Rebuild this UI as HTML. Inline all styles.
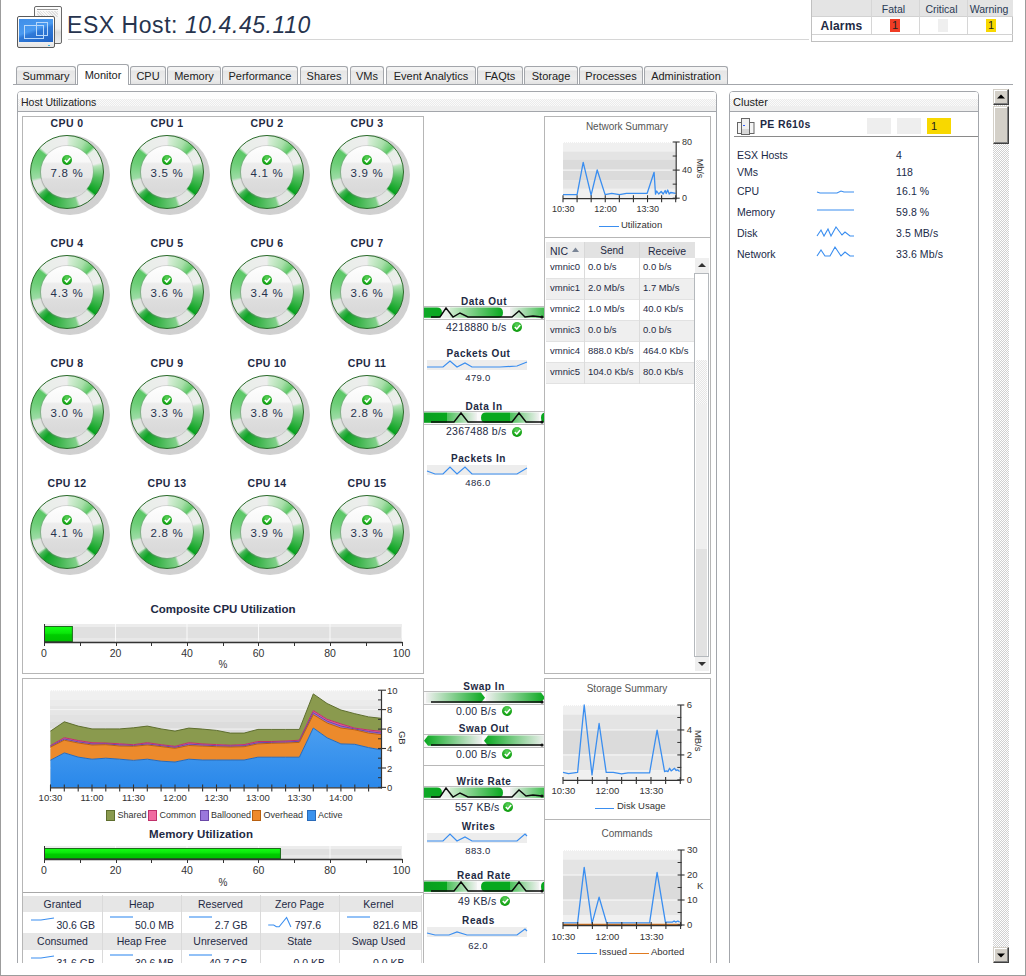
<!DOCTYPE html>
<html><head><meta charset="utf-8"><style>
*{box-sizing:border-box;margin:0;padding:0}
html,body{width:1026px;height:976px;overflow:hidden;background:#fff}
body{position:relative;font-family:"Liberation Sans",sans-serif;font-size:10.5px;color:#1e2a44}
.a{position:absolute}
.t{position:absolute;white-space:nowrap;line-height:1}
.c{text-align:center}
.r{text-align:right}
.b{font-weight:bold}
.hatch{background-color:#eeeeee;background-image:repeating-linear-gradient(45deg,rgba(255,255,255,.75) 0 1px,transparent 1px 3px),repeating-linear-gradient(-45deg,rgba(255,255,255,.75) 0 1px,transparent 1px 3px)}
.tab{position:absolute;top:66px;height:18px;border:1px solid #a3a6ab;border-bottom:none;border-radius:3px 3px 0 0;background:linear-gradient(#f4f4f4 0,#f4f4f4 15%,#e6e6e6 25%,#ececec 75%,#e2e2e2 100%);font-size:11px;color:#222;text-align:center;line-height:18px}
.panel{position:absolute;border:1px solid #a3a6ab;border-radius:4px 4px 0 0;background:#fff}
.ph{position:absolute;left:0;right:0;top:0;height:20px;border-bottom:1px solid #a3a6ab;border-radius:3px 3px 0 0;background:linear-gradient(#fdfdfd 0,#fdfdfd 7px,rgba(255,255,255,0) 7px,rgba(255,255,255,0) 14px,#eeeeee 14px,#eeeeee 19px),repeating-conic-gradient(#ebebeb 0 25%,#fafafa 0 50%) 0 0/2px 2px}
.box{position:absolute;border:1px solid #b6b6b6;background:#fff}
.g{position:absolute;width:90px;height:90px}
.gs{position:absolute;left:7.5px;top:7.5px;width:80px;height:80px;border-radius:50%;background:radial-gradient(circle,#cccccc 0,#d2d2d2 84%,rgba(230,230,230,0) 100%)}
.gr{position:absolute;left:8px;top:8px;width:74px;height:74px;border-radius:50%;border:1.5px solid #2a6c2a;background:conic-gradient(#ececec 0deg,#d6eed6 4deg,#a6dea8 30deg,#5cc865 46deg,#e6efe6 51deg,#eeeeee 74deg,#b5e3b8 79deg,#54c060 100deg,#07a11e 128deg,#dfe6df 133deg,#e6e6e6 158deg,#80d088 163deg,#3cb44c 195deg,#0ea326 220deg,#4ab85a 230deg,#dde8dd 235deg,#e4e4e4 254deg,#9cdca4 259deg,#6dcf78 285deg,#5cc867 308deg,#e8eee8 313deg,#eeeeee 360deg)}
.gl{position:absolute;left:9.5px;top:9.5px;width:71px;height:71px;border-radius:50%;background:radial-gradient(circle,rgba(255,255,255,0) 70%,rgba(255,255,255,.3) 80%,rgba(255,255,255,0) 90%,rgba(0,60,0,.18) 100%)}
.gi{position:absolute;left:19px;top:19px;width:52px;height:52px;border-radius:50%;background:linear-gradient(#fefefe 0,#f8f8f8 30%,#ededed 34%,#e8e8e8 60%,#dedede 64%,#d9d9d9 88%,#e2e2e2 100%);box-shadow:0 0 0 1px rgba(150,150,150,.3),-1px 1px 1px rgba(120,120,120,.35)}
.gc{position:absolute;left:40px;top:27.5px;width:10px;height:10px;border-radius:50%;background:radial-gradient(circle at 50% 30%,#5fd35f,#10a010 70%,#0a7a0a)}
.gt{position:absolute;left:0;width:90px;top:41px;text-align:center;font-size:11.5px;line-height:1;color:#26324c;letter-spacing:.7px}
.chk{position:absolute;width:10px;height:10px;border-radius:50%;background:radial-gradient(circle at 50% 30%,#5fd35f,#10a010 70%,#0a7a0a)}
</style></head><body>

<div class="a" style="left:34px;top:6px;width:28px;height:38px;border:1px solid #6a6a6a;border-radius:2px;background:linear-gradient(#fdfdfd,#f0f0f0 60%,#dcdcdc 70%,#eeeeee)"></div>
<div class="a" style="left:37px;top:9px;width:21px;height:1px;background:#9a9a9a"></div>
<div class="a" style="left:37px;top:11px;width:21px;height:6px;background:repeating-linear-gradient(45deg,#e0e0e0 0 1px,#f8f8f8 1px 2px)"></div>
<div class="a" style="left:17px;top:16px;width:38px;height:32px;border:1px solid #5a5a5a;border-radius:2px;background:linear-gradient(#fff,#f2f2f2 80%,#e4e4e4)"></div>
<div class="a" style="left:19px;top:19px;width:34px;height:23px;background:linear-gradient(160deg,#3f8ee8 0,#4a9af0 45%,#2f7ad8 55%,#1f62c4 100%)"></div>
<div class="a" style="left:24px;top:25px;width:20px;height:14px;border:1px solid #b8d8fa"></div>
<div class="a" style="left:36px;top:22px;width:12px;height:14px;border:1px solid #b8d8fa"></div>
<div class="a" style="left:48px;top:45px;width:2px;height:1px;background:#3ab0e0"></div>
<div class="t" style="left:67px;top:14px;font-size:23px;letter-spacing:.55px;color:#27344e">ESX Host: <i>10.4.45.110</i></div>
<div class="a" style="left:68px;top:39px;width:741px;height:1px;background:#d6d6d6"></div>
<div class="a" style="left:811px;top:0;width:202px;height:42px;border:1px solid #c0c0c0;border-top:none;background:#fff"><div class="a" style="left:0;top:0;width:201px;height:17px;background:#e4e4e4;border-bottom:1px solid #d2d2d2"></div><div class="a" style="left:0;top:34px;width:201px;height:1px;background:#d2d2d2"></div><div class="a" style="left:59px;top:0;width:1px;height:34px;background:#d6d6d6"></div><div class="a" style="left:107px;top:0;width:1px;height:34px;background:#d6d6d6"></div><div class="a" style="left:155px;top:0;width:1px;height:34px;background:#d6d6d6"></div><div class="t c" style="left:58px;top:4px;width:47px;font-size:10.5px;color:#2a3a55">Fatal</div><div class="t c" style="left:106px;top:4px;width:47px;font-size:10.5px;color:#2a3a55">Critical</div><div class="t c" style="left:154px;top:4px;width:46px;font-size:10.5px;color:#2a3a55">Warning</div><div class="t c b" style="left:0;top:19.5px;width:59px;font-size:12px;letter-spacing:.2px">Alarms</div><div class="a" style="left:78px;top:19px;width:10px;height:13px;background:#f03c24;font-size:11px;line-height:13px;text-align:center;color:#222">1</div><div class="a" style="left:126px;top:19px;width:10px;height:13px;background:#efefef"></div><div class="a" style="left:174px;top:19px;width:10px;height:13px;background:#f8d800;font-size:11px;line-height:13px;text-align:center;color:#222">1</div></div>
<div class="a" style="left:13px;top:84px;width:1000px;height:1px;background:#a3a6ab"></div>
<div class="tab" style="left:16px;width:60px">Summary</div>
<div class="tab" style="left:77px;top:64px;height:21px;width:52px;background:#fff;line-height:21px">Monitor</div>
<div class="tab" style="left:130px;width:36px">CPU</div>
<div class="tab" style="left:167px;width:54px">Memory</div>
<div class="tab" style="left:222px;width:76px">Performance</div>
<div class="tab" style="left:300px;width:48px">Shares</div>
<div class="tab" style="left:350px;width:34px">VMs</div>
<div class="tab" style="left:386px;width:90px">Event Analytics</div>
<div class="tab" style="left:477px;width:46px">FAQts</div>
<div class="tab" style="left:524px;width:54px">Storage</div>
<div class="tab" style="left:579px;width:64px">Processes</div>
<div class="tab" style="left:644px;width:84px">Administration</div>
<div class="panel" style="left:17px;top:91px;width:700px;height:890px"><div class="ph"></div><div class="t" style="left:3px;top:5px;font-size:10.5px;color:#222">Host Utilizations</div></div>
<div class="panel" style="left:729px;top:91px;width:250px;height:890px"><div class="ph"></div><div class="t" style="left:3px;top:5px;font-size:11px;color:#222">Cluster</div></div>
<div class="box" style="left:22px;top:116px;width:402px;height:558px"></div>
<div class="t c b" style="left:27px;top:118px;width:80px;font-size:10.5px;letter-spacing:.4px">CPU 0</div>
<div class="g" style="left:22px;top:127px"><div class="gs"></div><div class="gr"></div><div class="gl"></div><div class="gi"></div><div class="gc"><svg class="a" style="left:1.5px;top:2px" width="7" height="6" viewBox="0 0 7 6"><path d="M0.8 3 L2.8 5 L6.2 1" stroke="#fff" stroke-width="1.6" fill="none"/></svg></div><div class="gt">7.8 %</div></div>
<div class="t c b" style="left:127px;top:118px;width:80px;font-size:10.5px;letter-spacing:.4px">CPU 1</div>
<div class="g" style="left:122px;top:127px"><div class="gs"></div><div class="gr"></div><div class="gl"></div><div class="gi"></div><div class="gc"><svg class="a" style="left:1.5px;top:2px" width="7" height="6" viewBox="0 0 7 6"><path d="M0.8 3 L2.8 5 L6.2 1" stroke="#fff" stroke-width="1.6" fill="none"/></svg></div><div class="gt">3.5 %</div></div>
<div class="t c b" style="left:227px;top:118px;width:80px;font-size:10.5px;letter-spacing:.4px">CPU 2</div>
<div class="g" style="left:222px;top:127px"><div class="gs"></div><div class="gr"></div><div class="gl"></div><div class="gi"></div><div class="gc"><svg class="a" style="left:1.5px;top:2px" width="7" height="6" viewBox="0 0 7 6"><path d="M0.8 3 L2.8 5 L6.2 1" stroke="#fff" stroke-width="1.6" fill="none"/></svg></div><div class="gt">4.1 %</div></div>
<div class="t c b" style="left:327px;top:118px;width:80px;font-size:10.5px;letter-spacing:.4px">CPU 3</div>
<div class="g" style="left:322px;top:127px"><div class="gs"></div><div class="gr"></div><div class="gl"></div><div class="gi"></div><div class="gc"><svg class="a" style="left:1.5px;top:2px" width="7" height="6" viewBox="0 0 7 6"><path d="M0.8 3 L2.8 5 L6.2 1" stroke="#fff" stroke-width="1.6" fill="none"/></svg></div><div class="gt">3.9 %</div></div>
<div class="t c b" style="left:27px;top:238px;width:80px;font-size:10.5px;letter-spacing:.4px">CPU 4</div>
<div class="g" style="left:22px;top:247px"><div class="gs"></div><div class="gr"></div><div class="gl"></div><div class="gi"></div><div class="gc"><svg class="a" style="left:1.5px;top:2px" width="7" height="6" viewBox="0 0 7 6"><path d="M0.8 3 L2.8 5 L6.2 1" stroke="#fff" stroke-width="1.6" fill="none"/></svg></div><div class="gt">4.3 %</div></div>
<div class="t c b" style="left:127px;top:238px;width:80px;font-size:10.5px;letter-spacing:.4px">CPU 5</div>
<div class="g" style="left:122px;top:247px"><div class="gs"></div><div class="gr"></div><div class="gl"></div><div class="gi"></div><div class="gc"><svg class="a" style="left:1.5px;top:2px" width="7" height="6" viewBox="0 0 7 6"><path d="M0.8 3 L2.8 5 L6.2 1" stroke="#fff" stroke-width="1.6" fill="none"/></svg></div><div class="gt">3.6 %</div></div>
<div class="t c b" style="left:227px;top:238px;width:80px;font-size:10.5px;letter-spacing:.4px">CPU 6</div>
<div class="g" style="left:222px;top:247px"><div class="gs"></div><div class="gr"></div><div class="gl"></div><div class="gi"></div><div class="gc"><svg class="a" style="left:1.5px;top:2px" width="7" height="6" viewBox="0 0 7 6"><path d="M0.8 3 L2.8 5 L6.2 1" stroke="#fff" stroke-width="1.6" fill="none"/></svg></div><div class="gt">3.4 %</div></div>
<div class="t c b" style="left:327px;top:238px;width:80px;font-size:10.5px;letter-spacing:.4px">CPU 7</div>
<div class="g" style="left:322px;top:247px"><div class="gs"></div><div class="gr"></div><div class="gl"></div><div class="gi"></div><div class="gc"><svg class="a" style="left:1.5px;top:2px" width="7" height="6" viewBox="0 0 7 6"><path d="M0.8 3 L2.8 5 L6.2 1" stroke="#fff" stroke-width="1.6" fill="none"/></svg></div><div class="gt">3.6 %</div></div>
<div class="t c b" style="left:27px;top:358px;width:80px;font-size:10.5px;letter-spacing:.4px">CPU 8</div>
<div class="g" style="left:22px;top:367px"><div class="gs"></div><div class="gr"></div><div class="gl"></div><div class="gi"></div><div class="gc"><svg class="a" style="left:1.5px;top:2px" width="7" height="6" viewBox="0 0 7 6"><path d="M0.8 3 L2.8 5 L6.2 1" stroke="#fff" stroke-width="1.6" fill="none"/></svg></div><div class="gt">3.0 %</div></div>
<div class="t c b" style="left:127px;top:358px;width:80px;font-size:10.5px;letter-spacing:.4px">CPU 9</div>
<div class="g" style="left:122px;top:367px"><div class="gs"></div><div class="gr"></div><div class="gl"></div><div class="gi"></div><div class="gc"><svg class="a" style="left:1.5px;top:2px" width="7" height="6" viewBox="0 0 7 6"><path d="M0.8 3 L2.8 5 L6.2 1" stroke="#fff" stroke-width="1.6" fill="none"/></svg></div><div class="gt">3.3 %</div></div>
<div class="t c b" style="left:227px;top:358px;width:80px;font-size:10.5px;letter-spacing:.4px">CPU 10</div>
<div class="g" style="left:222px;top:367px"><div class="gs"></div><div class="gr"></div><div class="gl"></div><div class="gi"></div><div class="gc"><svg class="a" style="left:1.5px;top:2px" width="7" height="6" viewBox="0 0 7 6"><path d="M0.8 3 L2.8 5 L6.2 1" stroke="#fff" stroke-width="1.6" fill="none"/></svg></div><div class="gt">3.8 %</div></div>
<div class="t c b" style="left:327px;top:358px;width:80px;font-size:10.5px;letter-spacing:.4px">CPU 11</div>
<div class="g" style="left:322px;top:367px"><div class="gs"></div><div class="gr"></div><div class="gl"></div><div class="gi"></div><div class="gc"><svg class="a" style="left:1.5px;top:2px" width="7" height="6" viewBox="0 0 7 6"><path d="M0.8 3 L2.8 5 L6.2 1" stroke="#fff" stroke-width="1.6" fill="none"/></svg></div><div class="gt">2.8 %</div></div>
<div class="t c b" style="left:27px;top:478px;width:80px;font-size:10.5px;letter-spacing:.4px">CPU 12</div>
<div class="g" style="left:22px;top:487px"><div class="gs"></div><div class="gr"></div><div class="gl"></div><div class="gi"></div><div class="gc"><svg class="a" style="left:1.5px;top:2px" width="7" height="6" viewBox="0 0 7 6"><path d="M0.8 3 L2.8 5 L6.2 1" stroke="#fff" stroke-width="1.6" fill="none"/></svg></div><div class="gt">4.1 %</div></div>
<div class="t c b" style="left:127px;top:478px;width:80px;font-size:10.5px;letter-spacing:.4px">CPU 13</div>
<div class="g" style="left:122px;top:487px"><div class="gs"></div><div class="gr"></div><div class="gl"></div><div class="gi"></div><div class="gc"><svg class="a" style="left:1.5px;top:2px" width="7" height="6" viewBox="0 0 7 6"><path d="M0.8 3 L2.8 5 L6.2 1" stroke="#fff" stroke-width="1.6" fill="none"/></svg></div><div class="gt">2.8 %</div></div>
<div class="t c b" style="left:227px;top:478px;width:80px;font-size:10.5px;letter-spacing:.4px">CPU 14</div>
<div class="g" style="left:222px;top:487px"><div class="gs"></div><div class="gr"></div><div class="gl"></div><div class="gi"></div><div class="gc"><svg class="a" style="left:1.5px;top:2px" width="7" height="6" viewBox="0 0 7 6"><path d="M0.8 3 L2.8 5 L6.2 1" stroke="#fff" stroke-width="1.6" fill="none"/></svg></div><div class="gt">3.9 %</div></div>
<div class="t c b" style="left:327px;top:478px;width:80px;font-size:10.5px;letter-spacing:.4px">CPU 15</div>
<div class="g" style="left:322px;top:487px"><div class="gs"></div><div class="gr"></div><div class="gl"></div><div class="gi"></div><div class="gc"><svg class="a" style="left:1.5px;top:2px" width="7" height="6" viewBox="0 0 7 6"><path d="M0.8 3 L2.8 5 L6.2 1" stroke="#fff" stroke-width="1.6" fill="none"/></svg></div><div class="gt">3.3 %</div></div>
<div class="t c b" style="left:22px;top:604px;width:402px;font-size:11.5px;letter-spacing:0">Composite CPU Utilization</div>
<svg class="a" style="left:34px;top:622px" width="380" height="40" viewBox="34 622 380 40"><rect x="44" y="624" width="357.5" height="18" fill="#e0e0e0"/><rect x="44" y="624" width="357.5" height="3" fill="#ececec"/><rect x="44" y="638" width="357.5" height="3" fill="#e8e8e8"/><line x1="115.5" y1="624" x2="115.5" y2="642" stroke="#fafafa" stroke-width="1"/><line x1="187.0" y1="624" x2="187.0" y2="642" stroke="#fafafa" stroke-width="1"/><line x1="258.5" y1="624" x2="258.5" y2="642" stroke="#fafafa" stroke-width="1"/><line x1="330.0" y1="624" x2="330.0" y2="642" stroke="#fafafa" stroke-width="1"/><rect x="44.5" y="626.5" width="27.885" height="15" fill="url(#gbar)" stroke="#1d6a1d" stroke-width="1"/><defs><linearGradient id="gbar" x1="0" y1="0" x2="0" y2="1"><stop offset="0" stop-color="#14ff14"/><stop offset=".45" stop-color="#0ae60a"/><stop offset=".55" stop-color="#00cc00"/><stop offset="1" stop-color="#00c000"/></linearGradient></defs><line x1="44.5" y1="624" x2="44.5" y2="646" stroke="#333" stroke-width="1"/><line x1="44" y1="642.5" x2="402.5" y2="642.5" stroke="#333" stroke-width="1.3"/><line x1="44.5" y1="642" x2="44.5" y2="646" stroke="#333" stroke-width="1"/><line x1="80.5" y1="642" x2="80.5" y2="646" stroke="#333" stroke-width="1"/><line x1="116.5" y1="642" x2="116.5" y2="646" stroke="#333" stroke-width="1"/><line x1="151.5" y1="642" x2="151.5" y2="646" stroke="#333" stroke-width="1"/><line x1="187.5" y1="642" x2="187.5" y2="646" stroke="#333" stroke-width="1"/><line x1="223.5" y1="642" x2="223.5" y2="646" stroke="#333" stroke-width="1"/><line x1="258.5" y1="642" x2="258.5" y2="646" stroke="#333" stroke-width="1"/><line x1="294.5" y1="642" x2="294.5" y2="646" stroke="#333" stroke-width="1"/><line x1="330.5" y1="642" x2="330.5" y2="646" stroke="#333" stroke-width="1"/><line x1="366.5" y1="642" x2="366.5" y2="646" stroke="#333" stroke-width="1"/><line x1="402.5" y1="642" x2="402.5" y2="646" stroke="#333" stroke-width="1"/></svg><div class="t c" style="left:24.0px;top:648px;width:40px;font-size:10.5px;color:#333">0</div><div class="t c" style="left:95.5px;top:648px;width:40px;font-size:10.5px;color:#333">20</div><div class="t c" style="left:167.0px;top:648px;width:40px;font-size:10.5px;color:#333">40</div><div class="t c" style="left:238.5px;top:648px;width:40px;font-size:10.5px;color:#333">60</div><div class="t c" style="left:310.0px;top:648px;width:40px;font-size:10.5px;color:#333">80</div><div class="t c" style="left:381.5px;top:648px;width:40px;font-size:10.5px;color:#333">100</div>
<div class="t c" style="left:203px;top:660px;width:40px;font-size:10px;color:#333">%</div>
<div class="t c b" style="left:424px;top:297.1px;width:120px;font-size:10px;letter-spacing:.55px">Data Out</div>
<svg class="a" style="left:424px;top:306px" width="121" height="14" viewBox="424 306 121 14"><rect x="424" y="306" width="121" height="14" fill="#fafafa"/><defs><linearGradient id="mg1" x1="0" y1="0" x2="1" y2="0"><stop offset="0" stop-color="#10a828"/><stop offset="1" stop-color="#08a81e"/></linearGradient><linearGradient id="mg2" x1="0" y1="0" x2="1" y2="0"><stop offset="0" stop-color="#f2f2f2"/><stop offset="1" stop-color="#e4efe4"/></linearGradient><linearGradient id="mg3" x1="0" y1="0" x2="1" y2="0"><stop offset="0" stop-color="#cfeccf"/><stop offset="1" stop-color="#08a81e"/></linearGradient><linearGradient id="mg4" x1="0" y1="0" x2="1" y2="0"><stop offset="0" stop-color="#f0f0f0"/><stop offset="1" stop-color="#3cbc4c"/></linearGradient></defs><path d="M424 307.5 L437 307.5 Q442 307.5 442 312.65 Q442 317.8 437 317.8 L424 317.8 Z" fill="url(#mg1)"/><rect x="442" y="307.5" width="10" height="10.300000000000011" fill="url(#mg2)"/><path d="M450 307.5 L498 307.5 Q503 307.5 503 312.65 Q503 317.8 498 317.8 L450 317.8 Z" fill="url(#mg3)"/><rect x="510" y="307.5" width="35" height="10.300000000000011" fill="url(#mg4)"/><polyline points="431,317 440,317 446,308 453,317 460,313 468,317 512,317 519,311 525,317 533,316 542,317" fill="none" stroke="#0a0a0a" stroke-width="1.4"/><circle cx="542" cy="317" r="1.6" fill="#111"/><line x1="424" y1="306.5" x2="545" y2="306.5" stroke="#bdbdbd"/><line x1="424" y1="319.5" x2="545" y2="319.5" stroke="#bdbdbd"/></svg>
<div class="t" style="left:446px;top:321.5px;font-size:10.5px;letter-spacing:.25px">4218880 b/s</div><div class="chk" style="left:512px;top:321.7px"><svg class="a" style="left:1.5px;top:2px" width="7" height="6" viewBox="0 0 7 6"><path d="M0.8 3 L2.8 5 L6.2 1" stroke="#fff" stroke-width="1.6" fill="none"/></svg></div>
<div class="t c b" style="left:418.5px;top:348.8px;width:120px;font-size:10px;letter-spacing:.55px">Packets Out</div>
<svg class="a" style="left:426px;top:358px" width="104" height="14" viewBox="426 358 104 14"><rect x="427" y="360" width="100" height="10" fill="#ededed"/><polyline points="427,367 443,367 450,361 457,367 465,363 472,367 500,367 517,366 527,362" fill="none" stroke="#3a8ef0" stroke-width="1.2"/></svg>
<div class="t c" style="left:448px;top:373px;width:60px;font-size:9.5px;letter-spacing:.3px">479.0</div>
<div class="t c b" style="left:424px;top:402.1px;width:120px;font-size:10px;letter-spacing:.55px">Data In</div>
<svg class="a" style="left:424px;top:411px" width="121" height="14" viewBox="424 411 121 14"><rect x="424" y="411" width="121" height="14" fill="#fafafa"/><defs><linearGradient id="mg5" x1="0" y1="0" x2="1" y2="0"><stop offset="0" stop-color="#0a9e20"/><stop offset="1" stop-color="#08a81e"/></linearGradient><linearGradient id="mg6" x1="0" y1="0" x2="1" y2="0"><stop offset="0" stop-color="#4cc05a"/><stop offset="1" stop-color="#f2f2f2"/></linearGradient><linearGradient id="mg7" x1="0" y1="0" x2="1" y2="0"><stop offset="0" stop-color="#08a81e"/><stop offset="1" stop-color="#08a81e"/></linearGradient><linearGradient id="mg8" x1="0" y1="0" x2="1" y2="0"><stop offset="0" stop-color="#4cc05a"/><stop offset="1" stop-color="#f2f2f2"/></linearGradient><linearGradient id="mg9" x1="0" y1="0" x2="1" y2="0"><stop offset="0" stop-color="#08a81e"/><stop offset="1" stop-color="#08a81e"/></linearGradient></defs><rect x="424" y="412.5" width="23" height="10.300000000000011" fill="url(#mg5)"/><rect x="447" y="412.5" width="30" height="10.300000000000011" fill="url(#mg6)"/><path d="M510 412.5 L486 412.5 Q481 412.5 481 417.65 Q481 422.8 486 422.8 L510 422.8 Z" fill="url(#mg7)"/><rect x="510" y="412.5" width="29" height="10.300000000000011" fill="url(#mg8)"/><path d="M545 412.5 L546 412.5 Q541 412.5 541 417.65 Q541 422.8 546 422.8 L545 422.8 Z" fill="url(#mg9)"/><polyline points="431,422 454,422 461,413 468,422 512,422 519,413 526,422 542,422" fill="none" stroke="#0a0a0a" stroke-width="1.4"/><circle cx="542" cy="422" r="1.6" fill="#111"/><line x1="424" y1="411.5" x2="545" y2="411.5" stroke="#bdbdbd"/><line x1="424" y1="424.5" x2="545" y2="424.5" stroke="#bdbdbd"/></svg>
<div class="t" style="left:446px;top:426.40000000000003px;font-size:10.5px;letter-spacing:.25px">2367488 b/s</div><div class="chk" style="left:512px;top:426.6px"><svg class="a" style="left:1.5px;top:2px" width="7" height="6" viewBox="0 0 7 6"><path d="M0.8 3 L2.8 5 L6.2 1" stroke="#fff" stroke-width="1.6" fill="none"/></svg></div>
<div class="t c b" style="left:418.5px;top:453.8px;width:120px;font-size:10px;letter-spacing:.55px">Packets In</div>
<svg class="a" style="left:426px;top:463px" width="104" height="14" viewBox="426 463 104 14"><rect x="427" y="465" width="100" height="10" fill="#ededed"/><polyline points="427,471 435,474 443,474 450,467 457,474 465,467 472,474 517,474 527,468" fill="none" stroke="#3a8ef0" stroke-width="1.2"/></svg>
<div class="t c" style="left:448px;top:478px;width:60px;font-size:9.5px;letter-spacing:.3px">486.0</div>
<div class="t c b" style="left:424px;top:681.5px;width:120px;font-size:10px;letter-spacing:.55px">Swap In</div>
<svg class="a" style="left:424px;top:691px" width="121" height="14" viewBox="424 691 121 14"><rect x="424" y="691" width="121" height="14" fill="#fafafa"/><defs><linearGradient id="mg10" x1="0" y1="0" x2="1" y2="0"><stop offset="0" stop-color="#f0f0f0"/><stop offset="1" stop-color="#08a81e"/></linearGradient><linearGradient id="mg11" x1="0" y1="0" x2="1" y2="0"><stop offset="0" stop-color="#f0f0f0"/><stop offset="1" stop-color="#08a81e"/></linearGradient></defs><path d="M426 692.5 L481 692.5 L485 697.65 L481 702.8 L426 702.8 Z" fill="url(#mg10)"/><path d="M486 692.5 L541 692.5 L545 697.65 L541 702.8 L486 702.8 Z" fill="url(#mg11)"/><polyline points="431,702 542,702" fill="none" stroke="#0a0a0a" stroke-width="1.4"/><circle cx="542" cy="702" r="1.6" fill="#111"/><line x1="424" y1="691.5" x2="545" y2="691.5" stroke="#bdbdbd"/><line x1="424" y1="704.5" x2="545" y2="704.5" stroke="#bdbdbd"/></svg>
<div class="t" style="left:456px;top:706.0999999999999px;font-size:10.5px;letter-spacing:.25px">0.00 B/s</div><div class="chk" style="left:502px;top:706.3px"><svg class="a" style="left:1.5px;top:2px" width="7" height="6" viewBox="0 0 7 6"><path d="M0.8 3 L2.8 5 L6.2 1" stroke="#fff" stroke-width="1.6" fill="none"/></svg></div>
<div class="t c b" style="left:424px;top:724.3px;width:120px;font-size:10px;letter-spacing:.55px">Swap Out</div>
<svg class="a" style="left:424px;top:734px" width="121" height="14" viewBox="424 734 121 14"><rect x="424" y="734" width="121" height="14" fill="#fafafa"/><defs><linearGradient id="mg12" x1="0" y1="0" x2="1" y2="0"><stop offset="0" stop-color="#08a81e"/><stop offset="1" stop-color="#f0f0f0"/></linearGradient><linearGradient id="mg13" x1="0" y1="0" x2="1" y2="0"><stop offset="0" stop-color="#08a81e"/><stop offset="1" stop-color="#f0f0f0"/></linearGradient></defs><path d="M482 735.5 L428 735.5 L424 740.65 L428 745.8 L482 745.8 Z" fill="url(#mg12)"/><path d="M545 735.5 L488 735.5 L484 740.65 L488 745.8 L545 745.8 Z" fill="url(#mg13)"/><polyline points="431,745 542,745" fill="none" stroke="#0a0a0a" stroke-width="1.4"/><circle cx="542" cy="745" r="1.6" fill="#111"/><line x1="424" y1="734.5" x2="545" y2="734.5" stroke="#bdbdbd"/><line x1="424" y1="747.5" x2="545" y2="747.5" stroke="#bdbdbd"/></svg>
<div class="t" style="left:456px;top:748.8px;font-size:10.5px;letter-spacing:.25px">0.00 B/s</div><div class="chk" style="left:502px;top:749px"><svg class="a" style="left:1.5px;top:2px" width="7" height="6" viewBox="0 0 7 6"><path d="M0.8 3 L2.8 5 L6.2 1" stroke="#fff" stroke-width="1.6" fill="none"/></svg></div>
<div class="a" style="left:424px;top:765px;width:120px;height:1px;background:#b8b8b8"></div>
<div class="t c b" style="left:424px;top:776.9px;width:120px;font-size:10px;letter-spacing:.55px">Write Rate</div>
<svg class="a" style="left:424px;top:786px" width="121" height="14" viewBox="424 786 121 14"><rect x="424" y="786" width="121" height="14" fill="#fafafa"/><defs><linearGradient id="mg14" x1="0" y1="0" x2="1" y2="0"><stop offset="0" stop-color="#10a828"/><stop offset="1" stop-color="#08a81e"/></linearGradient><linearGradient id="mg15" x1="0" y1="0" x2="1" y2="0"><stop offset="0" stop-color="#f2f2f2"/><stop offset="1" stop-color="#e4efe4"/></linearGradient><linearGradient id="mg16" x1="0" y1="0" x2="1" y2="0"><stop offset="0" stop-color="#cfeccf"/><stop offset="1" stop-color="#08a81e"/></linearGradient><linearGradient id="mg17" x1="0" y1="0" x2="1" y2="0"><stop offset="0" stop-color="#f0f0f0"/><stop offset="1" stop-color="#3cbc4c"/></linearGradient></defs><path d="M424 787.5 L437 787.5 Q442 787.5 442 792.65 Q442 797.8 437 797.8 L424 797.8 Z" fill="url(#mg14)"/><rect x="442" y="787.5" width="10" height="10.299999999999955" fill="url(#mg15)"/><path d="M450 787.5 L498 787.5 Q503 787.5 503 792.65 Q503 797.8 498 797.8 L450 797.8 Z" fill="url(#mg16)"/><rect x="510" y="787.5" width="35" height="10.299999999999955" fill="url(#mg17)"/><polyline points="431,797 440,797 446,788 453,797 460,793 468,797 512,797 519,790 526,796 533,795 542,796" fill="none" stroke="#0a0a0a" stroke-width="1.4"/><circle cx="542" cy="796" r="1.6" fill="#111"/><line x1="424" y1="786.5" x2="545" y2="786.5" stroke="#bdbdbd"/><line x1="424" y1="799.5" x2="545" y2="799.5" stroke="#bdbdbd"/></svg>
<div class="t" style="left:455px;top:801.8px;font-size:10.5px;letter-spacing:.25px">557 KB/s</div><div class="chk" style="left:503px;top:802px"><svg class="a" style="left:1.5px;top:2px" width="7" height="6" viewBox="0 0 7 6"><path d="M0.8 3 L2.8 5 L6.2 1" stroke="#fff" stroke-width="1.6" fill="none"/></svg></div>
<div class="t c b" style="left:418.5px;top:821.9px;width:120px;font-size:10px;letter-spacing:.55px">Writes</div>
<svg class="a" style="left:426px;top:831px" width="104" height="14" viewBox="426 831 104 14"><rect x="427" y="833" width="100" height="10" fill="#ededed"/><polyline points="427,841 443,841 450,834 457,841 465,837 472,841 517,841 525,834 527,836" fill="none" stroke="#3a8ef0" stroke-width="1.2"/></svg>
<div class="t c" style="left:448px;top:846px;width:60px;font-size:9.5px;letter-spacing:.3px">883.0</div>
<div class="t c b" style="left:424px;top:870.9px;width:120px;font-size:10px;letter-spacing:.55px">Read Rate</div>
<svg class="a" style="left:424px;top:880px" width="121" height="14" viewBox="424 880 121 14"><rect x="424" y="880" width="121" height="14" fill="#fafafa"/><defs><linearGradient id="mg18" x1="0" y1="0" x2="1" y2="0"><stop offset="0" stop-color="#0a9e20"/><stop offset="1" stop-color="#08a81e"/></linearGradient><linearGradient id="mg19" x1="0" y1="0" x2="1" y2="0"><stop offset="0" stop-color="#4cc05a"/><stop offset="1" stop-color="#f2f2f2"/></linearGradient><linearGradient id="mg20" x1="0" y1="0" x2="1" y2="0"><stop offset="0" stop-color="#08a81e"/><stop offset="1" stop-color="#08a81e"/></linearGradient><linearGradient id="mg21" x1="0" y1="0" x2="1" y2="0"><stop offset="0" stop-color="#4cc05a"/><stop offset="1" stop-color="#f2f2f2"/></linearGradient><linearGradient id="mg22" x1="0" y1="0" x2="1" y2="0"><stop offset="0" stop-color="#08a81e"/><stop offset="1" stop-color="#08a81e"/></linearGradient></defs><rect x="424" y="881.5" width="23" height="10.299999999999955" fill="url(#mg18)"/><rect x="447" y="881.5" width="30" height="10.299999999999955" fill="url(#mg19)"/><path d="M510 881.5 L486 881.5 Q481 881.5 481 886.65 Q481 891.8 486 891.8 L510 891.8 Z" fill="url(#mg20)"/><rect x="510" y="881.5" width="29" height="10.299999999999955" fill="url(#mg21)"/><path d="M545 881.5 L546 881.5 Q541 881.5 541 886.65 Q541 891.8 546 891.8 L545 891.8 Z" fill="url(#mg22)"/><polyline points="431,891 454,891 461,882 468,891 512,891 519,882 526,891 542,891" fill="none" stroke="#0a0a0a" stroke-width="1.4"/><circle cx="542" cy="891" r="1.6" fill="#111"/><line x1="424" y1="880.5" x2="545" y2="880.5" stroke="#bdbdbd"/><line x1="424" y1="893.5" x2="545" y2="893.5" stroke="#bdbdbd"/></svg>
<div class="t" style="left:458px;top:895.8px;font-size:10.5px;letter-spacing:.25px">49 KB/s</div><div class="chk" style="left:500px;top:896px"><svg class="a" style="left:1.5px;top:2px" width="7" height="6" viewBox="0 0 7 6"><path d="M0.8 3 L2.8 5 L6.2 1" stroke="#fff" stroke-width="1.6" fill="none"/></svg></div>
<div class="t c b" style="left:418.5px;top:915.9px;width:120px;font-size:10px;letter-spacing:.55px">Reads</div>
<svg class="a" style="left:426px;top:925px" width="104" height="14" viewBox="426 925 104 14"><rect x="427" y="927" width="100" height="10" fill="#ededed"/><polyline points="427,933 435,935 449,935 457,932 467,935 517,935 525,929 527,931" fill="none" stroke="#3a8ef0" stroke-width="1.2"/></svg>
<div class="t c" style="left:448px;top:941px;width:60px;font-size:9.5px;letter-spacing:.3px">62.0</div>
<div class="box" style="left:544px;top:116px;width:167px;height:558px"></div>
<div class="a" style="left:545px;top:237px;width:165px;height:1px;background:#b6b6b6"></div>
<div class="t c" style="left:567px;top:122px;width:120px;font-size:10px;color:#555;letter-spacing:0">Network Summary</div>
<svg class="a" style="left:538.3px;top:117px" width="182.70000000000005" height="101.19999999999999" viewBox="538.3 117 182.70000000000005 101.19999999999999"><rect x="563.3" y="142.00" width="112.70000000000005" height="9.85" fill="#f0f0f0"/><rect x="563.3" y="151.55" width="112.70000000000005" height="8.73" fill="#e4e4e4"/><rect x="563.3" y="159.98" width="112.70000000000005" height="20.53" fill="#dbdbdb"/><rect x="563.3" y="180.22" width="112.70000000000005" height="8.73" fill="#e4e4e4"/><rect x="563.3" y="188.65" width="112.70000000000005" height="9.85" fill="#f0f0f0"/><line x1="563.3" y1="170.10" x2="676" y2="170.10" stroke="#fbfbfb" stroke-width="1"/><line x1="563.3" y1="142.5" x2="676" y2="142.5" stroke="#fff" stroke-width="1" stroke-dasharray="1 1"/><polyline points="563.30,194.60 577.40,194.60 583.50,162.30 591.40,195.10 597.50,170.00 605.40,194.60 612.00,193.30 619.80,194.60 626.80,193.30 647.50,193.30 654.40,172.30 655.80,194.20 657.00,191.00 659.00,194.00 661.50,191.50 663.50,194.00 665.50,190.50 666.50,193.50 668.00,190.00 669.50,194.00 671.00,192.50 676.00,193.30" fill="none" stroke="#3a8ef0" stroke-width="1.3" stroke-linejoin="round"/><line x1="676.5" y1="142" x2="676.5" y2="199.2" stroke="#333" stroke-width="1.2"/><line x1="563.3" y1="198.7" x2="677" y2="198.7" stroke="#333" stroke-width="1.3"/><line x1="673" y1="142.00" x2="680" y2="142.00" stroke="#333" stroke-width="1.1"/><line x1="673" y1="170.10" x2="680" y2="170.10" stroke="#333" stroke-width="1.1"/><line x1="673" y1="198.20" x2="680" y2="198.20" stroke="#333" stroke-width="1.1"/><line x1="673" y1="156.05" x2="677" y2="156.05" stroke="#333" stroke-width="1"/><line x1="673" y1="184.15" x2="677" y2="184.15" stroke="#333" stroke-width="1"/><line x1="563.30" y1="195.2" x2="563.30" y2="202.2" stroke="#333" stroke-width="1.1"/><line x1="577.39" y1="195.2" x2="577.39" y2="202.2" stroke="#333" stroke-width="1.1"/><line x1="591.47" y1="195.2" x2="591.47" y2="202.2" stroke="#333" stroke-width="1.1"/><line x1="605.56" y1="195.2" x2="605.56" y2="202.2" stroke="#333" stroke-width="1.1"/><line x1="619.65" y1="195.2" x2="619.65" y2="202.2" stroke="#333" stroke-width="1.1"/><line x1="633.74" y1="195.2" x2="633.74" y2="202.2" stroke="#333" stroke-width="1.1"/><line x1="647.83" y1="195.2" x2="647.83" y2="202.2" stroke="#333" stroke-width="1.1"/><line x1="661.91" y1="195.2" x2="661.91" y2="202.2" stroke="#333" stroke-width="1.1"/><line x1="676.00" y1="195.2" x2="676.00" y2="202.2" stroke="#333" stroke-width="1.1"/></svg><div class="t" style="left:682px;top:138.0px;font-size:9px;color:#333">80</div><div class="t" style="left:682px;top:166.1px;font-size:9px;color:#333">40</div><div class="t" style="left:682px;top:194.2px;font-size:9px;color:#333">0</div><div class="t c" style="left:538.3px;top:205.2px;width:50px;font-size:9px;color:#333">10:30</div><div class="t c" style="left:580.6px;top:205.2px;width:50px;font-size:9px;color:#333">12:00</div><div class="t c" style="left:622.8px;top:205.2px;width:50px;font-size:9px;color:#333">13:30</div><div class="t c" style="left:674px;top:164.1px;width:50px;font-size:9px;color:#333;transform:rotate(90deg)">Mb/s</div>
<div class="a" style="left:599px;top:225.5px;width:20px;height:1.3px;background:#3a8ef0"></div>
<div class="t" style="left:621px;top:220px;font-size:9.5px;color:#333">Utilization</div>
<div class="a" style="left:546px;top:242px;width:149px;height:16px;background:#e2e2e2"></div>
<div class="a" style="left:546px;top:242px;width:38px;height:16px;background:#ebebeb"></div>
<div class="a" style="left:584px;top:242px;width:1px;height:142px;background:#d8d8d8"></div>
<div class="a" style="left:639px;top:242px;width:1px;height:142px;background:#d8d8d8"></div>
<div class="t" style="left:550px;top:246px;font-size:10.5px">NIC</div>
<svg class="a" style="left:572px;top:247px" width="8" height="6"><path d="M0 5 L3.5 0.5 L7 5 Z" fill="#7a8596"/></svg>
<div class="t c" style="left:585px;top:246px;width:54px;font-size:10px">Send</div>
<div class="t c" style="left:640px;top:246px;width:54px;font-size:10.5px">Receive</div>
<div class="a" style="left:546px;top:258px;width:149px;height:21px;background:#ffffff;border-bottom:1px solid #e2e2e2"></div>
<div class="t" style="left:550px;top:262px;font-size:9.5px">vmnic0</div>
<div class="t" style="left:588px;top:262px;font-size:9.5px">0.0 b/s</div>
<div class="t" style="left:643px;top:262px;font-size:9.5px">0.0 b/s</div>
<div class="a" style="left:546px;top:279px;width:149px;height:21px;background:#efefef;border-bottom:1px solid #e2e2e2"></div>
<div class="t" style="left:550px;top:283px;font-size:9.5px">vmnic1</div>
<div class="t" style="left:588px;top:283px;font-size:9.5px">2.0 Mb/s</div>
<div class="t" style="left:643px;top:283px;font-size:9.5px">1.7 Mb/s</div>
<div class="a" style="left:546px;top:300px;width:149px;height:21px;background:#ffffff;border-bottom:1px solid #e2e2e2"></div>
<div class="t" style="left:550px;top:304px;font-size:9.5px">vmnic2</div>
<div class="t" style="left:588px;top:304px;font-size:9.5px">1.0 Mb/s</div>
<div class="t" style="left:643px;top:304px;font-size:9.5px">40.0 Kb/s</div>
<div class="a" style="left:546px;top:321px;width:149px;height:21px;background:#efefef;border-bottom:1px solid #e2e2e2"></div>
<div class="t" style="left:550px;top:325px;font-size:9.5px">vmnic3</div>
<div class="t" style="left:588px;top:325px;font-size:9.5px">0.0 b/s</div>
<div class="t" style="left:643px;top:325px;font-size:9.5px">0.0 b/s</div>
<div class="a" style="left:546px;top:342px;width:149px;height:21px;background:#ffffff;border-bottom:1px solid #e2e2e2"></div>
<div class="t" style="left:550px;top:346px;font-size:9.5px">vmnic4</div>
<div class="t" style="left:588px;top:346px;font-size:9.5px">888.0 Kb/s</div>
<div class="t" style="left:643px;top:346px;font-size:9.5px">464.0 Kb/s</div>
<div class="a" style="left:546px;top:363px;width:149px;height:21px;background:#efefef;border-bottom:1px solid #e2e2e2"></div>
<div class="t" style="left:550px;top:367px;font-size:9.5px">vmnic5</div>
<div class="t" style="left:588px;top:367px;font-size:9.5px">104.0 Kb/s</div>
<div class="t" style="left:643px;top:367px;font-size:9.5px">80.0 Kb/s</div>
<div class="a" style="left:584px;top:258px;width:1px;height:126px;background:#dcdcdc"></div>
<div class="a" style="left:639px;top:258px;width:1px;height:126px;background:#dcdcdc"></div>
<div class="a" style="left:695px;top:258px;width:14px;height:15px;background:#efefef"></div>
<svg class="a" style="left:698px;top:262px" width="8" height="6"><path d="M0 5 L4 1 L8 5 Z" fill="#333"/></svg>
<div class="a" style="left:694px;top:273px;width:15px;height:384px;border:1px solid #b4b8bc;background:#fff"></div>
<div class="a" style="left:696px;top:360px;width:11px;height:44px;background:repeating-conic-gradient(#e6e6e6 0 25%,#fafafa 0 50%) 0 0/2px 2px"></div>
<div class="a" style="left:696px;top:404px;width:11px;height:145px;background:#efefef"></div>
<div class="a" style="left:696px;top:549px;width:11px;height:107px;background:#e2e2e2"></div>
<div class="a" style="left:695px;top:657px;width:14px;height:14px;background:#efefef"></div>
<svg class="a" style="left:698px;top:661px" width="8" height="6"><path d="M0 1 L4 5 L8 1 Z" fill="#333"/></svg>
<div class="box" style="left:22px;top:678px;width:402px;height:300px"></div>
<svg class="a" style="left:30px;top:680px" width="380" height="115" viewBox="30 680 380 115"><rect x="50" y="690.2" width="331" height="9.999999999999954" fill="#f0f0f0"/><rect x="50" y="700" width="331" height="5.7" fill="#ebebeb"/><rect x="50" y="705.5" width="331" height="9.7" fill="#e6e6e6"/><rect x="50" y="715" width="331" height="7.2" fill="#e2e2e2"/><rect x="50" y="722" width="331" height="13.2" fill="#dcdcdc"/><rect x="50" y="735" width="331" height="25.2" fill="#d8d8d8"/><rect x="50" y="760" width="331" height="27.599999999999977" fill="#d8d8d8"/><line x1="50" y1="768.0" x2="381" y2="768.0" stroke="#f4f4f4"/><line x1="50" y1="748.5" x2="381" y2="748.5" stroke="#f4f4f4"/><line x1="50" y1="729.1" x2="381" y2="729.1" stroke="#f4f4f4"/><line x1="50" y1="709.6" x2="381" y2="709.6" stroke="#f4f4f4"/><line x1="50" y1="690.7" x2="381" y2="690.7" stroke="#fff" stroke-dasharray="1 1"/><polygon points="50.5,731.1 64.3,721.8 78.2,726.1 92.0,728.9 105.8,728.9 119.7,728.9 133.5,727.8 147.3,726.1 161.1,728.9 175.0,731.1 188.8,728.1 202.6,729.1 216.5,730.4 230.3,733.1 244.1,733.1 257.9,729.4 271.8,729.4 285.6,729.4 299.4,729.4 313.3,693.9 327.1,703.5 340.9,710.0 354.8,713.7 368.6,716.9 381.0,718.3 381.0,731.3 368.6,730.0 354.8,728.1 340.9,723.9 327.1,719.3 313.3,710.6 299.4,740.2 285.6,741.0 271.8,741.5 257.9,741.5 244.1,744.6 230.3,745.2 216.5,744.6 202.6,743.9 188.8,742.7 175.0,746.3 161.1,744.7 147.3,742.7 133.5,744.7 119.7,743.8 105.8,743.0 92.0,742.7 78.2,740.5 64.3,737.7 50.5,745.5" fill="#8a9a4e"/><polyline points="50.5,731.1 64.3,721.8 78.2,726.1 92.0,728.9 105.8,728.9 119.7,728.9 133.5,727.8 147.3,726.1 161.1,728.9 175.0,731.1 188.8,728.1 202.6,729.1 216.5,730.4 230.3,733.1 244.1,733.1 257.9,729.4 271.8,729.4 285.6,729.4 299.4,729.4 313.3,693.9 327.1,703.5 340.9,710.0 354.8,713.7 368.6,716.9 381.0,718.3" fill="none" stroke="#5e6e2e" stroke-width="1"/><polygon points="50.5,745.5 64.3,737.7 78.2,740.5 92.0,742.7 105.8,743.0 119.7,743.8 133.5,744.7 147.3,742.7 161.1,744.7 175.0,746.3 188.8,742.7 202.6,743.9 216.5,744.6 230.3,745.2 244.1,744.6 257.9,741.5 271.8,741.5 285.6,741.0 299.4,740.2 313.3,710.6 327.1,719.3 340.9,723.9 354.8,728.1 368.6,730.0 381.0,731.3 381.0,733.0 368.6,731.5 354.8,729.0 340.9,726.0 327.1,721.1 313.3,712.6 299.4,741.3 285.6,742.0 271.8,742.4 257.9,742.7 244.1,745.7 230.3,746.1 216.5,745.7 202.6,745.0 188.8,744.1 175.0,747.3 161.1,745.7 147.3,743.9 133.5,745.5 119.7,744.9 105.8,743.9 92.0,743.9 78.2,741.8 64.3,739.0 50.5,746.3" fill="#e45a9a"/><polyline points="50.5,745.5 64.3,737.7 78.2,740.5 92.0,742.7 105.8,743.0 119.7,743.8 133.5,744.7 147.3,742.7 161.1,744.7 175.0,746.3 188.8,742.7 202.6,743.9 216.5,744.6 230.3,745.2 244.1,744.6 257.9,741.5 271.8,741.5 285.6,741.0 299.4,740.2 313.3,710.6 327.1,719.3 340.9,723.9 354.8,728.1 368.6,730.0 381.0,731.3" fill="none" stroke="#c0306a" stroke-width="1"/><polygon points="50.5,746.3 64.3,739.0 78.2,741.8 92.0,743.9 105.8,743.9 119.7,744.9 133.5,745.5 147.3,743.9 161.1,745.7 175.0,747.3 188.8,744.1 202.6,745.0 216.5,745.7 230.3,746.1 244.1,745.7 257.9,742.7 271.8,742.4 285.6,742.0 299.4,741.3 313.3,712.6 327.1,721.1 340.9,726.0 354.8,729.0 368.6,731.5 381.0,733.0 381.0,734.6 368.6,733.1 354.8,729.8 340.9,728.0 327.1,723.0 313.3,714.6 299.4,742.4 285.6,743.0 271.8,743.3 257.9,743.9 244.1,746.7 230.3,747.0 216.5,746.7 202.6,746.1 188.8,745.5 175.0,748.3 161.1,746.6 147.3,745.0 133.5,746.3 119.7,746.0 105.8,744.7 92.0,745.0 78.2,743.0 64.3,740.2 50.5,747.1" fill="#9a70d8"/><polyline points="50.5,746.3 64.3,739.0 78.2,741.8 92.0,743.9 105.8,743.9 119.7,744.9 133.5,745.5 147.3,743.9 161.1,745.7 175.0,747.3 188.8,744.1 202.6,745.0 216.5,745.7 230.3,746.1 244.1,745.7 257.9,742.7 271.8,742.4 285.6,742.0 299.4,741.3 313.3,712.6 327.1,721.1 340.9,726.0 354.8,729.0 368.6,731.5 381.0,733.0" fill="none" stroke="#6a48a8" stroke-width="1"/><polygon points="50.5,747.1 64.3,740.2 78.2,743.0 92.0,745.0 105.8,744.7 119.7,746.0 133.5,746.3 147.3,745.0 161.1,746.6 175.0,748.3 188.8,745.5 202.6,746.1 216.5,746.7 230.3,747.0 244.1,746.7 257.9,743.9 271.8,743.3 285.6,743.0 299.4,742.4 313.3,714.6 327.1,723.0 340.9,728.0 354.8,729.8 368.6,733.1 381.0,734.6 381.0,749.8 368.6,747.6 354.8,744.3 340.9,743.9 327.1,737.8 313.3,728.0 299.4,757.2 285.6,757.2 271.8,757.2 257.9,757.2 244.1,760.0 230.3,760.0 216.5,760.0 202.6,760.0 188.8,759.2 175.0,762.0 161.1,761.2 147.3,759.2 133.5,760.4 119.7,759.2 105.8,758.2 92.0,759.2 78.2,757.1 64.3,752.9 50.5,760.2" fill="#ec8a2c"/><polyline points="50.5,747.1 64.3,740.2 78.2,743.0 92.0,745.0 105.8,744.7 119.7,746.0 133.5,746.3 147.3,745.0 161.1,746.6 175.0,748.3 188.8,745.5 202.6,746.1 216.5,746.7 230.3,747.0 244.1,746.7 257.9,743.9 271.8,743.3 285.6,743.0 299.4,742.4 313.3,714.6 327.1,723.0 340.9,728.0 354.8,729.8 368.6,733.1 381.0,734.6" fill="none" stroke="#b86010" stroke-width="1"/><defs><linearGradient id="actg" x1="0" y1="0" x2="0" y2="1"><stop offset="0" stop-color="#4a9ef0"/><stop offset="1" stop-color="#2a88ea"/></linearGradient></defs><polygon points="50.5,760.2 64.3,752.9 78.2,757.1 92.0,759.2 105.8,758.2 119.7,759.2 133.5,760.4 147.3,759.2 161.1,761.2 175.0,762.0 188.8,759.2 202.6,760.0 216.5,760.0 230.3,760.0 244.1,760.0 257.9,757.2 271.8,757.2 285.6,757.2 299.4,757.2 313.3,728.0 327.1,737.8 340.9,743.9 354.8,744.3 368.6,747.6 381.0,749.8 381.0,787.4 50.5,787.4" fill="url(#actg)"/><polyline points="50.5,760.2 64.3,752.9 78.2,757.1 92.0,759.2 105.8,758.2 119.7,759.2 133.5,760.4 147.3,759.2 161.1,761.2 175.0,762.0 188.8,759.2 202.6,760.0 216.5,760.0 230.3,760.0 244.1,760.0 257.9,757.2 271.8,757.2 285.6,757.2 299.4,757.2 313.3,728.0 327.1,737.8 340.9,743.9 354.8,744.3 368.6,747.6 381.0,749.8" fill="none" stroke="#2a6ab8" stroke-width="1"/><line x1="381.5" y1="690.2" x2="381.5" y2="788.4" stroke="#333" stroke-width="1.2"/><line x1="50" y1="787.9" x2="382" y2="787.9" stroke="#333" stroke-width="1.3"/><line x1="378" y1="787.4" x2="386" y2="787.4" stroke="#333" stroke-width="1.1"/><line x1="378" y1="777.7" x2="382" y2="777.7" stroke="#333" stroke-width="1"/><line x1="378" y1="768.0" x2="386" y2="768.0" stroke="#333" stroke-width="1.1"/><line x1="378" y1="758.2" x2="382" y2="758.2" stroke="#333" stroke-width="1"/><line x1="378" y1="748.5" x2="386" y2="748.5" stroke="#333" stroke-width="1.1"/><line x1="378" y1="738.8" x2="382" y2="738.8" stroke="#333" stroke-width="1"/><line x1="378" y1="729.1" x2="386" y2="729.1" stroke="#333" stroke-width="1.1"/><line x1="378" y1="719.4" x2="382" y2="719.4" stroke="#333" stroke-width="1"/><line x1="378" y1="709.6" x2="386" y2="709.6" stroke="#333" stroke-width="1.1"/><line x1="378" y1="699.9" x2="382" y2="699.9" stroke="#333" stroke-width="1"/><line x1="378" y1="690.2" x2="386" y2="690.2" stroke="#333" stroke-width="1.1"/><line x1="50.5" y1="784.4" x2="50.5" y2="791.4" stroke="#333" stroke-width="1.1"/><line x1="64.3" y1="784.4" x2="64.3" y2="791.4" stroke="#333" stroke-width="1.1"/><line x1="78.2" y1="784.4" x2="78.2" y2="791.4" stroke="#333" stroke-width="1.1"/><line x1="92.0" y1="784.4" x2="92.0" y2="791.4" stroke="#333" stroke-width="1.1"/><line x1="105.8" y1="784.4" x2="105.8" y2="791.4" stroke="#333" stroke-width="1.1"/><line x1="119.7" y1="784.4" x2="119.7" y2="791.4" stroke="#333" stroke-width="1.1"/><line x1="133.5" y1="784.4" x2="133.5" y2="791.4" stroke="#333" stroke-width="1.1"/><line x1="147.3" y1="784.4" x2="147.3" y2="791.4" stroke="#333" stroke-width="1.1"/><line x1="161.1" y1="784.4" x2="161.1" y2="791.4" stroke="#333" stroke-width="1.1"/><line x1="175.0" y1="784.4" x2="175.0" y2="791.4" stroke="#333" stroke-width="1.1"/><line x1="188.8" y1="784.4" x2="188.8" y2="791.4" stroke="#333" stroke-width="1.1"/><line x1="202.6" y1="784.4" x2="202.6" y2="791.4" stroke="#333" stroke-width="1.1"/><line x1="216.5" y1="784.4" x2="216.5" y2="791.4" stroke="#333" stroke-width="1.1"/><line x1="230.3" y1="784.4" x2="230.3" y2="791.4" stroke="#333" stroke-width="1.1"/><line x1="244.1" y1="784.4" x2="244.1" y2="791.4" stroke="#333" stroke-width="1.1"/><line x1="257.9" y1="784.4" x2="257.9" y2="791.4" stroke="#333" stroke-width="1.1"/><line x1="271.8" y1="784.4" x2="271.8" y2="791.4" stroke="#333" stroke-width="1.1"/><line x1="285.6" y1="784.4" x2="285.6" y2="791.4" stroke="#333" stroke-width="1.1"/><line x1="299.4" y1="784.4" x2="299.4" y2="791.4" stroke="#333" stroke-width="1.1"/><line x1="313.3" y1="784.4" x2="313.3" y2="791.4" stroke="#333" stroke-width="1.1"/><line x1="327.1" y1="784.4" x2="327.1" y2="791.4" stroke="#333" stroke-width="1.1"/><line x1="340.9" y1="784.4" x2="340.9" y2="791.4" stroke="#333" stroke-width="1.1"/><line x1="354.8" y1="784.4" x2="354.8" y2="791.4" stroke="#333" stroke-width="1.1"/><line x1="368.6" y1="784.4" x2="368.6" y2="791.4" stroke="#333" stroke-width="1.1"/></svg>
<div class="t" style="left:387px;top:782.9px;font-size:9.5px;color:#333">0</div>
<div class="t" style="left:387px;top:763.5px;font-size:9.5px;color:#333">2</div>
<div class="t" style="left:387px;top:744.0px;font-size:9.5px;color:#333">4</div>
<div class="t" style="left:387px;top:724.6px;font-size:9.5px;color:#333">6</div>
<div class="t" style="left:387px;top:705.1px;font-size:9.5px;color:#333">8</div>
<div class="t" style="left:387px;top:685.7px;font-size:9.5px;color:#333">10</div>
<div class="t c" style="left:377px;top:733px;width:50px;font-size:9.5px;color:#333;transform:rotate(90deg)">GB</div>
<div class="t c" style="left:25.5px;top:793px;width:50px;font-size:9.5px;color:#333">10:30</div>
<div class="t c" style="left:67.0px;top:793px;width:50px;font-size:9.5px;color:#333">11:00</div>
<div class="t c" style="left:108.5px;top:793px;width:50px;font-size:9.5px;color:#333">11:30</div>
<div class="t c" style="left:150.0px;top:793px;width:50px;font-size:9.5px;color:#333">12:00</div>
<div class="t c" style="left:191.5px;top:793px;width:50px;font-size:9.5px;color:#333">12:30</div>
<div class="t c" style="left:232.9px;top:793px;width:50px;font-size:9.5px;color:#333">13:00</div>
<div class="t c" style="left:274.4px;top:793px;width:50px;font-size:9.5px;color:#333">13:30</div>
<div class="t c" style="left:315.9px;top:793px;width:50px;font-size:9.5px;color:#333">14:00</div>
<div class="a" style="left:106px;top:810px;width:9px;height:11px;background:#8a9a4e;border:1px solid #5e6e2e"></div>
<div class="t" style="left:117.5px;top:811px;font-size:9px;color:#333">Shared</div>
<div class="a" style="left:148px;top:810px;width:9px;height:11px;background:#f06aa0;border:1px solid #c0306a"></div>
<div class="t" style="left:159.5px;top:811px;font-size:9px;color:#333">Common</div>
<div class="a" style="left:200px;top:810px;width:9px;height:11px;background:#9a78dc;border:1px solid #6a48a8"></div>
<div class="t" style="left:211px;top:811px;font-size:9px;color:#333">Ballooned</div>
<div class="a" style="left:252px;top:810px;width:9px;height:11px;background:#ee8a2c;border:1px solid #b86010"></div>
<div class="t" style="left:263.5px;top:811px;font-size:9px;color:#333">Overhead</div>
<div class="a" style="left:306.5px;top:810px;width:9px;height:11px;background:#3a92ee;border:1px solid #2a6ab8"></div>
<div class="t" style="left:318px;top:811px;font-size:9px;color:#333">Active</div>
<div class="t c b" style="left:22px;top:828.5px;width:358px;font-size:11.5px;letter-spacing:.1px">Memory Utilization</div>
<svg class="a" style="left:34px;top:844px" width="380" height="40" viewBox="34 844 380 40"><rect x="44" y="846" width="357.5" height="13" fill="#e0e0e0"/><rect x="44" y="846" width="357.5" height="3" fill="#ececec"/><rect x="44" y="855" width="357.5" height="3" fill="#e8e8e8"/><line x1="115.5" y1="846" x2="115.5" y2="859" stroke="#fafafa" stroke-width="1"/><line x1="187.0" y1="846" x2="187.0" y2="859" stroke="#fafafa" stroke-width="1"/><line x1="258.5" y1="846" x2="258.5" y2="859" stroke="#fafafa" stroke-width="1"/><line x1="330.0" y1="846" x2="330.0" y2="859" stroke="#fafafa" stroke-width="1"/><rect x="44.5" y="848.5" width="235.95" height="10" fill="url(#gbar)" stroke="#1d6a1d" stroke-width="1"/><defs><linearGradient id="gbar" x1="0" y1="0" x2="0" y2="1"><stop offset="0" stop-color="#14ff14"/><stop offset=".45" stop-color="#0ae60a"/><stop offset=".55" stop-color="#00cc00"/><stop offset="1" stop-color="#00c000"/></linearGradient></defs><line x1="44.5" y1="846" x2="44.5" y2="863" stroke="#333" stroke-width="1"/><line x1="44" y1="859.5" x2="402.5" y2="859.5" stroke="#333" stroke-width="1.3"/><line x1="44.5" y1="859" x2="44.5" y2="863" stroke="#333" stroke-width="1"/><line x1="80.5" y1="859" x2="80.5" y2="863" stroke="#333" stroke-width="1"/><line x1="116.5" y1="859" x2="116.5" y2="863" stroke="#333" stroke-width="1"/><line x1="151.5" y1="859" x2="151.5" y2="863" stroke="#333" stroke-width="1"/><line x1="187.5" y1="859" x2="187.5" y2="863" stroke="#333" stroke-width="1"/><line x1="223.5" y1="859" x2="223.5" y2="863" stroke="#333" stroke-width="1"/><line x1="258.5" y1="859" x2="258.5" y2="863" stroke="#333" stroke-width="1"/><line x1="294.5" y1="859" x2="294.5" y2="863" stroke="#333" stroke-width="1"/><line x1="330.5" y1="859" x2="330.5" y2="863" stroke="#333" stroke-width="1"/><line x1="366.5" y1="859" x2="366.5" y2="863" stroke="#333" stroke-width="1"/><line x1="402.5" y1="859" x2="402.5" y2="863" stroke="#333" stroke-width="1"/></svg><div class="t c" style="left:24.0px;top:865px;width:40px;font-size:10.5px;color:#333">0</div><div class="t c" style="left:95.5px;top:865px;width:40px;font-size:10.5px;color:#333">20</div><div class="t c" style="left:167.0px;top:865px;width:40px;font-size:10.5px;color:#333">40</div><div class="t c" style="left:238.5px;top:865px;width:40px;font-size:10.5px;color:#333">60</div><div class="t c" style="left:310.0px;top:865px;width:40px;font-size:10.5px;color:#333">80</div><div class="t c" style="left:381.5px;top:865px;width:40px;font-size:10.5px;color:#333">100</div>
<div class="t c" style="left:203px;top:878px;width:40px;font-size:10px;color:#333">%</div>
<div class="a" style="left:23px;top:892px;width:400px;height:1px;background:#a8a8a8"></div>
<div class="a" style="left:23px;top:895.5px;width:399px;height:16px;background:#e6e6e6"></div>
<div class="t c" style="left:23px;top:898.5px;width:79px;font-size:10.5px">Granted</div>
<div class="t r" style="left:15px;top:919.5px;width:80px;font-size:10.5px">30.6 GB</div>
<svg class="a" style="left:31px;top:914.5px" width="25" height="14"><path d="M0 5 L10 5 L23 3" fill="none" stroke="#3a8ef0" stroke-width="1.1"/></svg>
<div class="t c" style="left:102px;top:898.5px;width:79px;font-size:10.5px">Heap</div>
<div class="t r" style="left:94px;top:919.5px;width:80px;font-size:10.5px">50.0 MB</div>
<svg class="a" style="left:110px;top:914.5px" width="25" height="14"><path d="M0 2 L23 2" fill="none" stroke="#3a8ef0" stroke-width="1.1"/></svg>
<div class="t c" style="left:181px;top:898.5px;width:79px;font-size:10.5px">Reserved</div>
<div class="t r" style="left:167.5px;top:919.5px;width:80px;font-size:10.5px">2.7 GB</div>
<svg class="a" style="left:189px;top:914.5px" width="25" height="14"><path d="M0 2 L23 2" fill="none" stroke="#3a8ef0" stroke-width="1.1"/></svg>
<div class="t c" style="left:260px;top:898.5px;width:79px;font-size:10.5px">Zero Page</div>
<div class="t r" style="left:241px;top:919.5px;width:80px;font-size:10.5px">797.6</div>
<svg class="a" style="left:268px;top:914.5px" width="25" height="14"><path d="M0.2 10 L5.7 10 L8.4 11.8 L11.1 11.8 L18.6 2.5 L22.9 12" fill="none" stroke="#3a8ef0" stroke-width="1.1"/></svg>
<div class="t c" style="left:339px;top:898.5px;width:79px;font-size:10.5px">Kernel</div>
<div class="t r" style="left:338px;top:919.5px;width:80px;font-size:10.5px">821.6 MB</div>
<svg class="a" style="left:347px;top:914.5px" width="25" height="14"><path d="M0 2 L23 2" fill="none" stroke="#3a8ef0" stroke-width="1.1"/></svg>
<div class="a" style="left:23px;top:933px;width:399px;height:16.5px;background:#e6e6e6"></div>
<div class="t c" style="left:23px;top:936px;width:79px;font-size:10.5px">Consumed</div>
<div class="t r" style="left:15px;top:957.5px;width:80px;font-size:10.5px">31.6 GB</div>
<svg class="a" style="left:31px;top:952.5px" width="25" height="14"><path d="M0 5 L10 5 L23 3" fill="none" stroke="#3a8ef0" stroke-width="1.1"/></svg>
<div class="t c" style="left:102px;top:936px;width:79px;font-size:10.5px">Heap Free</div>
<div class="t r" style="left:94px;top:957.5px;width:80px;font-size:10.5px">30.6 MB</div>
<svg class="a" style="left:110px;top:952.5px" width="25" height="14"><path d="M0 2 L23 2" fill="none" stroke="#3a8ef0" stroke-width="1.1"/></svg>
<div class="t c" style="left:181px;top:936px;width:79px;font-size:10.5px">Unreserved</div>
<div class="t r" style="left:167.5px;top:957.5px;width:80px;font-size:10.5px">40.7 GB</div>
<svg class="a" style="left:189px;top:952.5px" width="25" height="14"><path d="M0 2 L23 2" fill="none" stroke="#3a8ef0" stroke-width="1.1"/></svg>
<div class="t c" style="left:260px;top:936px;width:79px;font-size:10.5px">State</div>
<div class="t r" style="left:245px;top:957.5px;width:80px;font-size:10.5px">0.0 KB</div>
<div class="t c" style="left:339px;top:936px;width:79px;font-size:10.5px">Swap Used</div>
<div class="t r" style="left:324.5px;top:957.5px;width:80px;font-size:10.5px">0.0 KB</div>
<div class="a" style="left:102px;top:895px;width:1px;height:70px;background:#dadada"></div>
<div class="a" style="left:181px;top:895px;width:1px;height:70px;background:#dadada"></div>
<div class="a" style="left:260px;top:895px;width:1px;height:70px;background:#dadada"></div>
<div class="a" style="left:339px;top:895px;width:1px;height:70px;background:#dadada"></div>
<div class="a" style="left:421px;top:895px;width:1px;height:70px;background:#dadada"></div>
<div class="box" style="left:544px;top:678px;width:167px;height:300px"></div>
<div class="a" style="left:545px;top:819px;width:165px;height:1px;background:#b6b6b6"></div>
<div class="t c" style="left:567px;top:684px;width:120px;font-size:10px;color:#555">Storage Summary</div>
<svg class="a" style="left:538.4px;top:679.5px" width="187.30000000000007" height="119.89999999999998" viewBox="538.4 679.5 187.30000000000007 119.89999999999998"><rect x="563.4" y="704.50" width="117.30000000000007" height="10.04" fill="#f0f0f0"/><rect x="563.4" y="714.24" width="117.30000000000007" height="15.28" fill="#e4e4e4"/><rect x="563.4" y="729.22" width="117.30000000000007" height="25.77" fill="#dbdbdb"/><rect x="563.4" y="754.68" width="117.30000000000007" height="15.28" fill="#e4e4e4"/><rect x="563.4" y="769.66" width="117.30000000000007" height="10.04" fill="#f0f0f0"/><line x1="563.4" y1="729.47" x2="680.7" y2="729.47" stroke="#fbfbfb" stroke-width="1"/><line x1="563.4" y1="754.43" x2="680.7" y2="754.43" stroke="#fbfbfb" stroke-width="1"/><line x1="563.4" y1="705.0" x2="680.7" y2="705.0" stroke="#fff" stroke-width="1" stroke-dasharray="1 1"/><polyline points="563.40,771.90 568.90,773.10 578.00,771.90 584.60,704.50 592.40,774.40 599.50,723.00 606.60,771.90 613.60,771.90 621.90,773.30 628.50,772.30 650.00,772.30 657.50,729.70 665.00,771.10 666.60,770.40 668.30,771.10 670.00,767.80 671.60,770.40 674.90,767.80 676.60,770.00 678.20,769.50 680.00,771.10" fill="none" stroke="#3a8ef0" stroke-width="1.3" stroke-linejoin="round"/><line x1="681.2" y1="704.5" x2="681.2" y2="780.4" stroke="#333" stroke-width="1.2"/><line x1="563.4" y1="779.9" x2="681.7" y2="779.9" stroke="#333" stroke-width="1.3"/><line x1="677.7" y1="704.50" x2="684.7" y2="704.50" stroke="#333" stroke-width="1.1"/><line x1="677.7" y1="729.47" x2="684.7" y2="729.47" stroke="#333" stroke-width="1.1"/><line x1="677.7" y1="754.43" x2="684.7" y2="754.43" stroke="#333" stroke-width="1.1"/><line x1="677.7" y1="779.40" x2="684.7" y2="779.40" stroke="#333" stroke-width="1.1"/><line x1="677.7" y1="716.98" x2="681.7" y2="716.98" stroke="#333" stroke-width="1"/><line x1="677.7" y1="741.95" x2="681.7" y2="741.95" stroke="#333" stroke-width="1"/><line x1="677.7" y1="766.92" x2="681.7" y2="766.92" stroke="#333" stroke-width="1"/><line x1="563.40" y1="776.4" x2="563.40" y2="783.4" stroke="#333" stroke-width="1.1"/><line x1="578.06" y1="776.4" x2="578.06" y2="783.4" stroke="#333" stroke-width="1.1"/><line x1="592.73" y1="776.4" x2="592.73" y2="783.4" stroke="#333" stroke-width="1.1"/><line x1="607.39" y1="776.4" x2="607.39" y2="783.4" stroke="#333" stroke-width="1.1"/><line x1="622.05" y1="776.4" x2="622.05" y2="783.4" stroke="#333" stroke-width="1.1"/><line x1="636.71" y1="776.4" x2="636.71" y2="783.4" stroke="#333" stroke-width="1.1"/><line x1="651.38" y1="776.4" x2="651.38" y2="783.4" stroke="#333" stroke-width="1.1"/><line x1="666.04" y1="776.4" x2="666.04" y2="783.4" stroke="#333" stroke-width="1.1"/><line x1="680.70" y1="776.4" x2="680.70" y2="783.4" stroke="#333" stroke-width="1.1"/></svg><div class="t" style="left:686.7px;top:700.2px;font-size:9.5px;color:#333">6</div><div class="t" style="left:686.7px;top:725.2px;font-size:9.5px;color:#333">4</div><div class="t" style="left:686.7px;top:750.2px;font-size:9.5px;color:#333">2</div><div class="t" style="left:686.7px;top:775.1px;font-size:9.5px;color:#333">0</div><div class="t c" style="left:538.4px;top:786.4px;width:50px;font-size:9.5px;color:#333">10:30</div><div class="t c" style="left:582.4px;top:786.4px;width:50px;font-size:9.5px;color:#333">12:00</div><div class="t c" style="left:626.4px;top:786.4px;width:50px;font-size:9.5px;color:#333">13:30</div><div class="t c" style="left:673px;top:735.95px;width:50px;font-size:9.5px;color:#333;transform:rotate(90deg)">MB/s</div>
<div class="a" style="left:594.5px;top:807.5px;width:19px;height:1.3px;background:#3a8ef0"></div>
<div class="t" style="left:617px;top:801px;font-size:9.5px;color:#333">Disk Usage</div>
<div class="t c" style="left:567px;top:829px;width:120px;font-size:10px;color:#555">Commands</div>
<svg class="a" style="left:538.4px;top:824.5px" width="187.60000000000002" height="120.0" viewBox="538.4 824.5 187.60000000000002 120.0"><rect x="563.4" y="849.50" width="117.60000000000002" height="10.05" fill="#f0f0f0"/><rect x="563.4" y="859.25" width="117.60000000000002" height="15.30" fill="#e4e4e4"/><rect x="563.4" y="874.25" width="117.60000000000002" height="25.80" fill="#dbdbdb"/><rect x="563.4" y="899.75" width="117.60000000000002" height="15.30" fill="#e4e4e4"/><rect x="563.4" y="914.75" width="117.60000000000002" height="10.05" fill="#f0f0f0"/><line x1="563.4" y1="874.50" x2="681" y2="874.50" stroke="#fbfbfb" stroke-width="1"/><line x1="563.4" y1="899.50" x2="681" y2="899.50" stroke="#fbfbfb" stroke-width="1"/><line x1="563.4" y1="850.0" x2="681" y2="850.0" stroke="#fff" stroke-width="1" stroke-dasharray="1 1"/><polyline points="563.40,922.40 578.00,922.40 584.60,866.90 592.40,923.20 599.50,896.70 607.00,922.40 650.00,922.40 657.50,871.90 665.80,921.60 673.00,921.60 674.50,920.50 676.00,921.60 678.30,920.50 680.00,921.60" fill="none" stroke="#3a8ef0" stroke-width="1.3" stroke-linejoin="round"/><polyline points="563.40,924.00 681.00,924.00" fill="none" stroke="#e07a20" stroke-width="1.6" stroke-linejoin="round"/><line x1="681.5" y1="849.5" x2="681.5" y2="925.5" stroke="#333" stroke-width="1.2"/><line x1="563.4" y1="925.0" x2="682" y2="925.0" stroke="#333" stroke-width="1.3"/><line x1="678" y1="849.50" x2="685" y2="849.50" stroke="#333" stroke-width="1.1"/><line x1="678" y1="874.50" x2="685" y2="874.50" stroke="#333" stroke-width="1.1"/><line x1="678" y1="899.50" x2="685" y2="899.50" stroke="#333" stroke-width="1.1"/><line x1="678" y1="924.50" x2="685" y2="924.50" stroke="#333" stroke-width="1.1"/><line x1="678" y1="862.00" x2="682" y2="862.00" stroke="#333" stroke-width="1"/><line x1="678" y1="887.00" x2="682" y2="887.00" stroke="#333" stroke-width="1"/><line x1="678" y1="912.00" x2="682" y2="912.00" stroke="#333" stroke-width="1"/><line x1="563.40" y1="921.5" x2="563.40" y2="928.5" stroke="#333" stroke-width="1.1"/><line x1="578.10" y1="921.5" x2="578.10" y2="928.5" stroke="#333" stroke-width="1.1"/><line x1="592.80" y1="921.5" x2="592.80" y2="928.5" stroke="#333" stroke-width="1.1"/><line x1="607.50" y1="921.5" x2="607.50" y2="928.5" stroke="#333" stroke-width="1.1"/><line x1="622.20" y1="921.5" x2="622.20" y2="928.5" stroke="#333" stroke-width="1.1"/><line x1="636.90" y1="921.5" x2="636.90" y2="928.5" stroke="#333" stroke-width="1.1"/><line x1="651.60" y1="921.5" x2="651.60" y2="928.5" stroke="#333" stroke-width="1.1"/><line x1="666.30" y1="921.5" x2="666.30" y2="928.5" stroke="#333" stroke-width="1.1"/><line x1="681.00" y1="921.5" x2="681.00" y2="928.5" stroke="#333" stroke-width="1.1"/></svg><div class="t" style="left:687px;top:845.2px;font-size:9.5px;color:#333">30</div><div class="t" style="left:687px;top:870.2px;font-size:9.5px;color:#333">20</div><div class="t" style="left:687px;top:895.2px;font-size:9.5px;color:#333">10</div><div class="t" style="left:687px;top:920.2px;font-size:9.5px;color:#333">0</div><div class="t c" style="left:538.4px;top:931.5px;width:50px;font-size:9.5px;color:#333">10:30</div><div class="t c" style="left:582.5px;top:931.5px;width:50px;font-size:9.5px;color:#333">12:00</div><div class="t c" style="left:626.6px;top:931.5px;width:50px;font-size:9.5px;color:#333">13:30</div><div class="t" style="left:697px;top:881.0px;font-size:9.5px;color:#333">K</div>
<div class="a" style="left:577px;top:953px;width:20px;height:1.3px;background:#3a8ef0"></div>
<div class="t" style="left:599px;top:947px;font-size:9.5px;color:#333">Issued</div>
<div class="a" style="left:629px;top:953px;width:20px;height:1.3px;background:#e07a20"></div>
<div class="t" style="left:651px;top:947px;font-size:9.5px;color:#333">Aborted</div>
<svg class="a" style="left:737px;top:118px" width="18" height="17" viewBox="0 0 18 17"><rect x="0.5" y="4.5" width="4" height="11" fill="#f4f4f4" stroke="#666"/><rect x="12.5" y="4.5" width="4.5" height="11" fill="#f4f4f4" stroke="#666"/><rect x="4.5" y="0.5" width="8" height="16" fill="#f0f0f0" stroke="#666"/><rect x="6" y="7" width="2" height="1" fill="#3060ff"/><rect x="5" y="11" width="7" height="5" fill="#d8d8d8"/></svg>
<div class="t b" style="left:760px;top:119px;font-size:10.5px;letter-spacing:.35px">PE R610s</div>
<div class="a" style="left:867px;top:118px;width:24px;height:16px;background:#eeeeee"></div>
<div class="a" style="left:897px;top:118px;width:24px;height:16px;background:#eeeeee"></div>
<div class="a" style="left:927px;top:118px;width:24px;height:16px;background:#f8d800"></div>
<div class="t" style="left:931px;top:121px;font-size:11px;color:#222">1</div>
<div class="a" style="left:734px;top:136px;width:244px;height:1px;background:#8a8a8a"></div>
<div class="t" style="left:737px;top:150px;font-size:10.5px;color:#1a2a48">ESX Hosts</div>
<div class="t" style="left:896px;top:150px;font-size:10.5px;letter-spacing:.1px;color:#1a2a48">4</div>
<div class="t" style="left:737px;top:167px;font-size:10.5px;color:#1a2a48">VMs</div>
<div class="t" style="left:896px;top:167px;font-size:10.5px;letter-spacing:.1px;color:#1a2a48">118</div>
<div class="t" style="left:737px;top:186px;font-size:10.5px;color:#1a2a48">CPU</div>
<div class="t" style="left:896px;top:186px;font-size:10.5px;letter-spacing:.1px;color:#1a2a48">16.1 %</div>
<svg class="a" style="left:816px;top:186px" width="40" height="14"><path d="M1 6 L4 7 L21 7 L25 5 L28 6 L38 6" fill="none" stroke="#3a8ef0" stroke-width="1.1"/></svg>
<div class="t" style="left:737px;top:207.2px;font-size:10.5px;color:#1a2a48">Memory</div>
<div class="t" style="left:896px;top:207.2px;font-size:10.5px;letter-spacing:.1px;color:#1a2a48">59.8 %</div>
<svg class="a" style="left:816px;top:208.7px" width="40" height="14"><path d="M1 1 L38 1" fill="none" stroke="#3a8ef0" stroke-width="1.1"/></svg>
<div class="t" style="left:737px;top:228px;font-size:10.5px;color:#1a2a48">Disk</div>
<div class="t" style="left:896px;top:228px;font-size:10.5px;letter-spacing:.1px;color:#1a2a48">3.5 MB/s</div>
<svg class="a" style="left:816px;top:225px" width="40" height="14"><path d="M1 11 L5 5 L8 11 L12 4 L15 11 L20 2 L26 10 L29 7 L34 11 L38 11" fill="none" stroke="#3a8ef0" stroke-width="1.1"/></svg>
<div class="t" style="left:737px;top:248.6px;font-size:10.5px;color:#1a2a48">Network</div>
<div class="t" style="left:896px;top:248.6px;font-size:10.5px;letter-spacing:.1px;color:#1a2a48">33.6 Mb/s</div>
<svg class="a" style="left:816px;top:244.6px" width="40" height="14"><path d="M1 11 L5 5 L9 11 L14 11 L19 2 L25 11 L29 7 L34 11 L38 11" fill="none" stroke="#3a8ef0" stroke-width="1.1"/></svg>
<div class="a" style="left:993px;top:89px;width:16px;height:874px;background:repeating-conic-gradient(#d0d0d0 0 25%,#ffffff 0 50%) 0 0/2px 2px"></div>
<div class="a" style="left:993px;top:89px;width:16px;height:16px;background:#d4d0c8;border-top:1px solid #d4d0c8;border-left:1px solid #d4d0c8;border-right:1px solid #404040;border-bottom:1px solid #404040;box-shadow:inset -1px -1px 0 #808080,inset 1px 1px 0 #ffffff"></div>
<svg class="a" style="left:997px;top:94px" width="8" height="5"><path d="M0 4.5 L4 0.5 L8 4.5 Z" fill="#000"/></svg>
<div class="a" style="left:993px;top:106px;width:16px;height:38px;background:#d4d0c8;border-top:1px solid #d4d0c8;border-left:1px solid #d4d0c8;border-right:1px solid #404040;border-bottom:1px solid #404040;box-shadow:inset -1px -1px 0 #808080,inset 1px 1px 0 #ffffff"></div>
<div class="a" style="left:993px;top:947px;width:16px;height:16px;background:#d4d0c8;border-top:1px solid #d4d0c8;border-left:1px solid #d4d0c8;border-right:1px solid #404040;border-bottom:1px solid #404040;box-shadow:inset -1px -1px 0 #808080,inset 1px 1px 0 #ffffff"></div>
<svg class="a" style="left:997px;top:953px" width="8" height="5"><path d="M0 0.5 L4 4.5 L8 0.5 Z" fill="#000"/></svg>
<div class="a" style="left:0;top:963px;width:1026px;height:13px;background:#fff"></div>
<div class="a" style="left:0;top:0;width:1px;height:976px;background:#9c9c9c"></div>
<div class="a" style="left:1025px;top:0;width:1px;height:976px;background:#9c9c9c"></div>
<div class="a" style="left:0;top:975px;width:1026px;height:1px;background:#9c9c9c"></div>
</body></html>
